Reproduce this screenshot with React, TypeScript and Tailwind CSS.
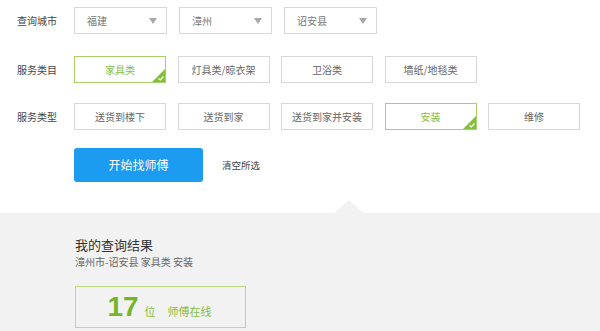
const FONT = 'font-["Noto_Sans_CJK_SC","Liberation_Sans",sans-serif]';

const cities = ['福建', '漳州', '诏安县'];
const categories = ['家具类', '灯具类/晾衣架', '卫浴类', '墙纸/地毯类'];
const serviceTypes = ['送货到楼下', '送货到家', '送货到家并安装', '安装', '维修'];

function SelectBox({ value }: { value: string }) {
  return (
    <div className="w-[93px] h-[27px] border border-[#d8d8d8] flex items-center justify-between pl-[12px] pr-[9px] text-[10px] text-[#777]">
      <span>{value}</span>
      <span className="w-0 h-0 border-l-[4px] border-r-[4px] border-t-[6px] border-l-transparent border-r-transparent border-t-[#a8a8a8]" />
    </div>
  );
}

function OptionBox({ label, active }: { label: string; active?: boolean }) {
  return (
    <div
      className={
        active
          ? 'relative w-[92px] h-[27px] border border-[#a8d06a] flex items-center justify-center text-[10px] text-[#86bd45]'
          : 'relative w-[92px] h-[27px] border border-[#d8d8d8] flex items-center justify-center text-[10px] text-[#666]'
      }
    >
      {label}
      {active && (
        <svg className="absolute right-0 bottom-0" width="13" height="13" viewBox="0 0 13 13">
          <polygon points="13,0 13,13 0,13" fill="#84bf3c" />
          <path d="M6.5 9.5 L8.3 11 L11.5 7.5" stroke="#fff" strokeWidth="1.2" fill="none" />
        </svg>
      )}
    </div>
  );
}

function Row({ label, children, className }: { label: string; children: React.ReactNode; className?: string }) {
  return (
    <div className={'flex items-center h-[27px] ' + (className || '')}>
      <div className="w-[57px] text-[10px] text-[#444]">{label}</div>
      {children}
    </div>
  );
}

export default function App() {
  return (
    <div className={'w-[600px] h-[331px] overflow-hidden bg-white ' + FONT}>
      <div className="pl-[17px] pt-[7px]">
        <Row label="查询城市">
          <div className="flex gap-[12px]">
            {cities.map(c => (
              <SelectBox key={c} value={c} />
            ))}
          </div>
        </Row>

        <Row label="服务类目" className="mt-[22px]">
          <div className="flex gap-[11.5px]">
            {categories.map((c, i) => (
              <OptionBox key={c} label={c} active={i === 0} />
            ))}
          </div>
        </Row>

        <Row label="服务类型" className="mt-[20px]">
          <div className="flex gap-[11.5px]">
            {serviceTypes.map((s, i) => (
              <OptionBox key={s} label={s} active={i === 3} />
            ))}
          </div>
        </Row>

        <div className="flex items-center mt-[18px] pl-[57px]">
          <button className="w-[129px] h-[34px] rounded-[3px] bg-[#1c9cf0] text-white text-[12px]">
            开始找师傅
          </button>
          <span className="ml-[19px] text-[9.5px] text-[#444]">清空所选</span>
        </div>
      </div>

      <div className="relative mt-[31px] bg-[#f2f2f2] h-[200px] pl-[75px] pt-[23px]">
        <div className="absolute top-[-13px] left-[334px] w-0 h-0 border-l-[15px] border-r-[15px] border-b-[13px] border-l-transparent border-r-transparent border-b-[#f2f2f2]" />
        <div className="text-[13px] leading-[17px] text-[#333]">我的查询结果</div>
        <div className="mt-[2px] text-[10px] leading-[14px] text-[#666]">漳州市-诏安县 家具类 安装</div>
        <div className="mt-[17px] w-[171px] h-[42px] border border-[#bcd884] flex items-baseline justify-center pt-[5px] pr-[2px] text-[#86bd45]">
          <span className={'text-[28px] font-bold leading-[30px] text-[#76b52a] font-["Liberation_Sans",sans-serif]'}>17</span>
          <span className="ml-[6px] text-[11px]">位</span>
          <span className="ml-[12px] text-[11px]">师傅在线</span>
        </div>
      </div>
    </div>
  );
}
